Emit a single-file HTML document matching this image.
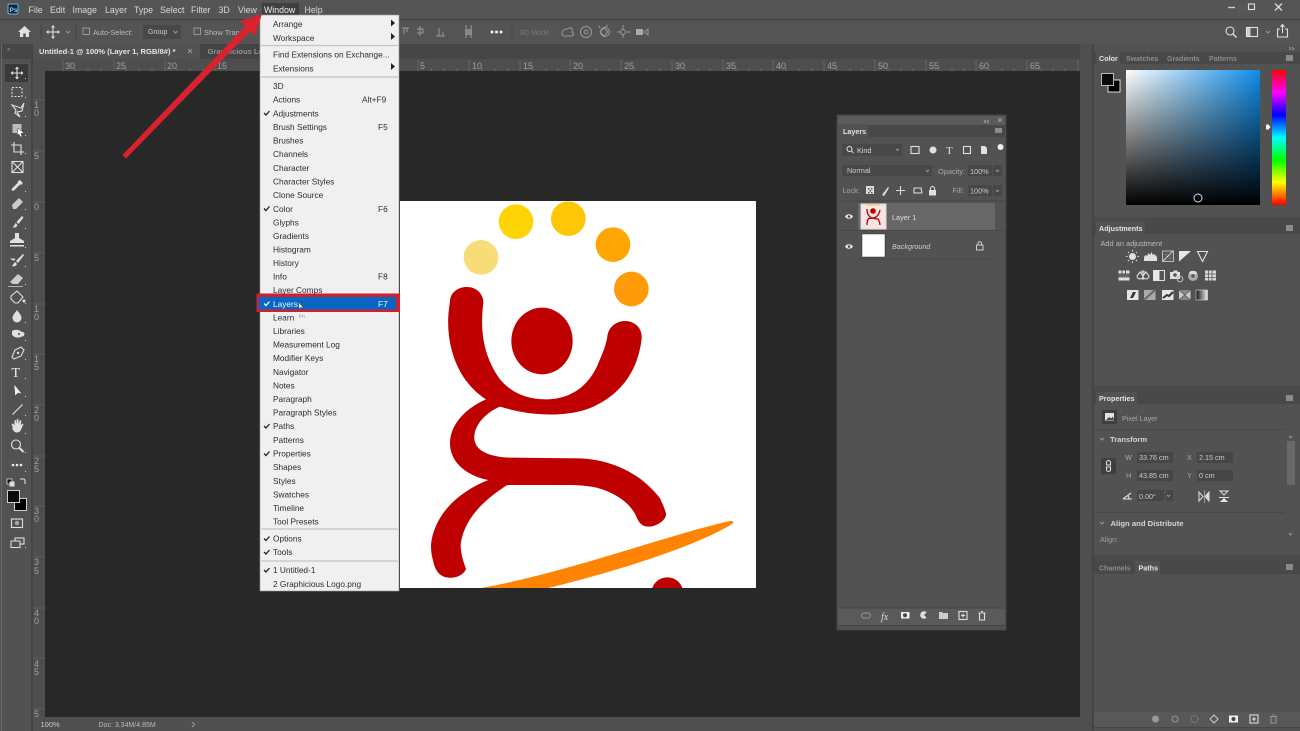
<!DOCTYPE html>
<html><head><meta charset="utf-8"><title>Photoshop</title>
<style>
html,body{margin:0;padding:0;background:#525252;width:1300px;height:731px;overflow:hidden}
svg{display:block;filter:blur(.35px)}
text{font-family:"Liberation Sans",sans-serif;font-size:8.8px;fill:#d8d8d8}
.m text{fill:#2c2c2c;font-size:8.3px}
.t{fill:#e4e4e4;font-weight:bold;font-size:7.2px}
.r text{fill:#a0a0a0;font-size:9px}
.s{fill:#aaa;font-size:7px}
.ic{fill:none;stroke:#e0e0e0;stroke-width:1.1}
.f{fill:#e0e0e0;stroke:none}
.g{fill:none;stroke:#9a9a9a;stroke-width:1}
</style></head><body>
<svg width="1300" height="731" viewBox="0 0 1300 731" xmlns="http://www.w3.org/2000/svg">
<defs>
<linearGradient id="cw" x1="0" x2="1" y1="0" y2="0"><stop offset="0" stop-color="#fff"/><stop offset="1" stop-color="#0f8ce8"/></linearGradient>
<linearGradient id="cb" x1="0" x2="0" y1="0" y2="1"><stop offset="0" stop-color="#000" stop-opacity="0"/><stop offset="1" stop-color="#000"/></linearGradient>
<linearGradient id="hue" x1="0" x2="0" y1="0" y2="1"><stop offset="0" stop-color="#f00"/><stop offset=".167" stop-color="#f0f"/><stop offset=".333" stop-color="#00f"/><stop offset=".5" stop-color="#0ff"/><stop offset=".667" stop-color="#0f0"/><stop offset=".833" stop-color="#ff0"/><stop offset="1" stop-color="#f00"/></linearGradient>
<linearGradient id="gr" x1="0" x2="1" y1="0" y2="0"><stop offset="0" stop-color="#111"/><stop offset="1" stop-color="#eee"/></linearGradient>
<clipPath id="cv"><rect x="400" y="201" width="356" height="387"/></clipPath>
</defs>

<!-- base -->
<rect width="1300" height="731" fill="#525252"/>
<rect x="0" y="0" width="1300" height="19" fill="#555"/>
<rect x="0" y="19" width="1300" height="1" fill="#3f3f3f"/>
<rect x="0" y="20" width="1300" height="24" fill="#545454"/>
<rect x="0" y="44" width="1093" height="15" fill="#464646"/>
<rect x="33" y="44" width="167" height="15" fill="#525252"/>
<rect x="200" y="44" width="60" height="15" fill="#444"/>
<rect x="33" y="59" width="1047" height="12" fill="#4e4e4e"/>
<rect x="33" y="59" width="12" height="658" fill="#4e4e4e"/>
<rect x="45" y="71" width="1035" height="646" fill="#282828"/>
<rect x="33" y="717" width="1047" height="14" fill="#505050"/>
<rect x="1" y="44" width="1" height="687" fill="#6a6a6a"/>
<rect x="3" y="59" width="29" height="672" fill="#525252"/>
<rect x="31" y="44" width="2" height="687" fill="#444"/>
<rect x="1080" y="44" width="13" height="687" fill="#4f4f4f"/>
<rect x="1092" y="44" width="2" height="687" fill="#444"/>
<rect x="5" y="64" width="23" height="18" fill="#3a3a3a"/>

<!-- title/menu bar -->
<rect x="8" y="4" width="10" height="10" rx="1.5" fill="#0c2438" stroke="#6cb6e8" stroke-width="1"/>
<text x="9.5" y="12" style="font-size:6.5px;fill:#8cd0ff;font-weight:bold">Ps</text>
<text x="28.5" y="13">File</text><text x="50" y="13">Edit</text><text x="72.5" y="13">Image</text><text x="105" y="13">Layer</text><text x="134" y="13">Type</text><text x="160" y="13">Select</text><text x="191" y="13">Filter</text><text x="218.5" y="13">3D</text><text x="238" y="13">View</text>
<rect x="262" y="3" width="37" height="14" fill="#3f3f3f"/>
<text x="264" y="13" style="fill:#f0f0f0">Window</text><text x="304.5" y="13">Help</text>
<rect x="1237" y="5" width="13" height="9" fill="#5a5a5a" opacity=".5"/>
<path d="M1228 7.5h7" stroke="#ccc" stroke-width="1.4"/><rect x="1248.5" y="4" width="6" height="5.5" class="ic"/><path d="M1275 3.5l7 7M1282 3.5l-7 7" stroke="#ddd" stroke-width="1.3"/>

<!-- options bar -->
<path class="f" d="M18 32l6.5-6 6.5 6h-2v5h-3.2v-3.5h-2.6V37H20v-5z"/>
<path d="M41 23v18M76 23v18" stroke="#444"/>
<g class="ic"><path d="M53 27v10M48 32h10"/></g><path class="f" d="M53 25l2 2.5h-4zM53 39l2-2.5h-4zM46 32l2.5-2v4zM60 32l-2.5-2v4z"/>
<path class="g" d="M66 31l2 2 2-2"/>
<rect x="83" y="28" width="6.5" height="6.5" class="g" stroke="#888"/>
<text x="93" y="35" style="fill:#bbb;font-size:7.3px">Auto-Select:</text>
<rect x="143" y="25" width="38" height="14" fill="#484848"/>
<text x="148" y="34" style="fill:#ccc;font-size:7px">Group</text><path class="g" d="M173.500 31l2 2 2-2"/>
<rect x="194" y="28" width="6.500" height="6.500" class="g"/>
<text x="204" y="35" style="fill:#bbb;font-size:7.5px">Show Trans</text>
<g class="g" stroke-width="1.2">
<path d="M402 28h7M404 28v6M407 28v4M420 26v10M417 29h6v4h-6M436 36h9M439 28v8M443 32v4M466 25v13M471 25v13"/>
<rect x="465" y="29" width="7" height="6" fill="#888" stroke="none"/>
</g>
<circle cx="492" cy="32" r="1.500" fill="#eee"/><circle cx="496.500" cy="32" r="1.500" fill="#eee"/><circle cx="501" cy="32" r="1.500" fill="#eee"/>
<path d="M512 25v14" stroke="#4a4a4a"/>
<text x="519.500" y="35" style="fill:#787878;font-size:7.4px">3D Mode</text>
<g fill="none" stroke="#999" stroke-width="1">
<path d="M562 33c0-3 3-4 5-4s2-2 4-1c2 1 2 3 1 4 2 1 2 4-1 4h-7c-1 0-2-1-2-3z"/>
<circle cx="586" cy="32" r="5.500"/><circle cx="586" cy="32" r="2"/>
<path d="M600 32l4-4 4 4-4 4zM605 27l3-2M600 28l-1-2"/><circle cx="605" cy="32" r="4.500"/>
<circle cx="623" cy="32" r="2.500"/><path d="M623 25v4M623 35v3M617 32h3M626 32h5"/>
</g>
<rect x="636" y="29" width="7" height="6" fill="#aaa"/><path d="M644 32l4-3v6z" fill="none" stroke="#999"/>
<!-- right options -->
<circle cx="1230" cy="31" r="4" class="ic" stroke-width="1.300"/><path d="M1233 34l3.500 3.500" stroke="#ddd" stroke-width="1.500"/>
<rect x="1246.500" y="27.500" width="11" height="9" class="ic"/><rect x="1247" y="28" width="3.500" height="8" fill="#ccc"/>
<path class="g" d="M1266 31l2 2 2-2"/>
<path class="ic" d="M1280 29h-2.500v8h10v-8H1285M1282.500 33v-8M1280.500 27l2-2.500 2 2.500" stroke-width="1.200"/>

<!-- tabs -->
<text x="39" y="54" class="t" style="font-size:7.6px">Untitled-1 @ 100% (Layer 1, RGB/8#) *</text>
<path d="M188 49l4 4M192 49l-4 4" stroke="#999"/>
<text x="207.500" y="54" style="fill:#929292;font-weight:bold;font-size:7.6px">Graphicious Le</text>
<text x="7" y="51" style="font-size:6px;fill:#999">»</text>

<!-- ruler -->
<g class="r">
<text x="65" y="69">30</text><text x="116" y="69">25</text><text x="167" y="69">20</text><text x="217" y="69">15</text>
<text x="420" y="69">5</text><text x="472" y="69">10</text><text x="523" y="69">15</text><text x="573" y="69">20</text><text x="624" y="69">25</text><text x="675" y="69">30</text><text x="726" y="69">35</text><text x="776" y="69">40</text><text x="827" y="69">45</text><text x="878" y="69">50</text><text x="929" y="69">55</text><text x="979" y="69">60</text><text x="1030" y="69">65</text>
<text x="34" y="108">1</text><text x="34" y="116">0</text><text x="34" y="159">5</text><text x="34" y="210">0</text><text x="34" y="261">5</text>
<text x="34" y="312">1</text><text x="34" y="320">0</text><text x="34" y="362">1</text><text x="34" y="370">5</text>
<text x="34" y="413">2</text><text x="34" y="421">0</text><text x="34" y="464">2</text><text x="34" y="472">5</text>
<text x="34" y="514">3</text><text x="34" y="522">0</text><text x="34" y="565">3</text><text x="34" y="574">5</text>
<text x="34" y="616">4</text><text x="34" y="624">0</text><text x="34" y="667">4</text><text x="34" y="675">5</text><text x="34" y="717">5</text>
</g>
<path d="M63 60v11M114 60v11M165 60v11M215 60v11M418 60v11M469 60v11M520 60v11M570 60v11M621 60v11M672 60v11M723 60v11M773 60v11M824 60v11M875 60v11M926 60v11M976 60v11M1027 60v11M1078 60v11" stroke="#6e6e6e" stroke-width=".8"/>
<path d="M75 68v3M88 68v3M101 68v3M126 68v3M139 68v3M152 68v3M177 68v3M190 68v3M203 68v3M431 68v3M444 68v3M457 68v3M482 68v3M495 68v3M508 68v3M533 68v3M546 68v3M558 68v3M583 68v3M596 68v3M609 68v3M634 68v3M647 68v3M660 68v3M685 68v3M698 68v3M710 68v3M736 68v3M749 68v3M761 68v3M786 68v3M799 68v3M812 68v3M837 68v3M850 68v3M862 68v3M888 68v3M901 68v3M913 68v3M939 68v3M952 68v3M964 68v3M989 68v3M1002 68v3M1014 68v3M1040 68v3M1053 68v3M1065 68v3" stroke="#757575" stroke-width=".7"/>
<path d="M33 100h12M33 151h12M33 202h12M33 253h12M33 304h12M33 354h12M33 405h12M33 456h12M33 506h12M33 557h12M33 608h12M33 658h12M33 709h12" stroke="#666" stroke-width=".8"/>

<!-- toolbar -->
<g>
<path class="ic" d="M17 68v10M12 73h10"/><path class="f" d="M17 66.500l2 2.500h-4zM17 79.500l2-2.500h-4zM10.500 73l2.500-2v4zM23.500 73l-2.500-2v4z"/>
<rect x="12" y="87.500" width="10" height="9" class="ic" stroke-dasharray="2 1.500"/>
<path class="ic" d="M12 105l9 3 3-5-2 8-5 1 3 5-5-4 1-3-4-5z"/>
<rect x="12.500" y="124" width="9" height="9" class="f" opacity=".75"/><path d="M18 128l6 5-3 .5 1 3-2 .5-1-3-2 1.500z" fill="#fff" stroke="#333" stroke-width=".5"/>
<path d="M14 142v10h10M11 145h10v10" class="ic" stroke-width="1.400"/>
<rect x="12" y="161.500" width="11" height="11" class="ic"/><path class="ic" d="M12 161.500l11 11M23 161.500l-11 11"/>
<path class="f" d="M20 180l3 3-2 2-1-.5-5.500 5.500-2 1-1-1 1-2 5.500-5.500-.5-1z"/>
<path class="f" d="M12 205l7-7 4 4-7 7-3 0z" opacity=".85"/>
<path class="f" d="M22 216l1.500 1.500-5 6.500-2-2zM15.500 223l2 2c-.5 2-3 3-5 2.500 1.500-1 2-3 3-4.500z"/>
<path class="f" d="M15 233h4v5l5 3v2H10v-2l5-3zM10 245h14v1.500H10z"/>
<path class="f" d="M23 254l1 1-6 8-2-2zM10 258c2 1 4 0 5 1s-1 2-3 1M15 262l2 2c-1 2-3 3-5 2z"/>
<path class="f" d="M18 274l5 4-5 6h-5l-3-2zM8 286h15v.8H8z" opacity=".85"/>
<path class="ic" d="M11 296l6-5 6 6-5 6h-3l-4-4z" stroke-width="1.300"/><circle cx="24" cy="301" r="1.500" class="f"/>
<path class="f" d="M17 310c2 3 4.500 5 4.500 8a4.500 4.500 0 0 1-9 0c0-3 2.500-5 4.500-8z"/>
<path class="f" d="M12 331c3-2 7-1.500 9 .5l3 1c1 2 0 4-2 4-3 2-9 1-10-2z"/><circle cx="19" cy="334" r="1" fill="#444"/>
<path class="ic" d="M12 357l3-7 6-3 3 3-3 6-7 3z" stroke-width="1.300"/><circle cx="18" cy="353" r="1.200" class="f"/>
<text x="11.500" y="377" style="font-size:14px;font-family:'Liberation Serif',serif;fill:#eee">T</text>
<path d="M14 384l1 12 3-3 4 1z" fill="#eee" stroke="#333" stroke-width=".4"/>
<path d="M12.500 414.500l10-10" stroke="#ddd" stroke-width="1.200"/>
<path class="f" d="M13 428l-1.500-4 1.500-.5 1.500 2v-5l1.500-.5.800 4v-5h1.500l.5 5 1-4 1.500.5-.5 5 1.500-2 1.200.8-2.500 5.500c-1 2-2 2.700-4 2.700-2.500 0-3.500-1.500-5-4.500z"/>
<circle cx="16" cy="444.500" r="4.500" class="ic" stroke-width="1.500"/><path d="M19.500 448l4 4" stroke="#ddd" stroke-width="2"/>
<circle cx="13" cy="465" r="1.300" fill="#eee"/><circle cx="17" cy="465" r="1.300" fill="#eee"/><circle cx="21" cy="465" r="1.300" fill="#eee"/>
<rect x="7" y="479" width="5" height="5" fill="#111" stroke="#ddd" stroke-width=".8"/><rect x="9.500" y="481.500" width="5" height="5" fill="#ddd"/>
<path class="ic" d="M20 479h3.500a1.500 1.500 0 0 1 1.500 1.500V484"/>
<rect x="14.500" y="498.500" width="12" height="12" fill="#000" stroke="#ccc" stroke-width="1"/>
<rect x="7.500" y="490.500" width="12" height="12" fill="#0a0a0a" stroke="#ccc" stroke-width="1"/>
<rect x="11.500" y="519" width="11" height="8.500" class="ic"/><circle cx="17" cy="523" r="2.200" class="f" opacity=".6"/>
<rect x="15" y="538" width="9" height="6" class="ic"/><rect x="11" y="541" width="9" height="6.500" fill="#525252" stroke="#e0e0e0" stroke-width="1"/>
<g fill="#ccc"><rect x="25" y="78" width="1" height="1"/><rect x="25" y="97" width="1" height="1"/><rect x="25" y="116" width="1" height="1"/><rect x="25" y="135" width="1" height="1"/><rect x="25" y="153" width="1" height="1"/><rect x="25" y="191" width="1" height="1"/><rect x="25" y="209" width="1" height="1"/><rect x="25" y="228" width="1" height="1"/><rect x="25" y="247" width="1" height="1"/><rect x="25" y="266" width="1" height="1"/><rect x="25" y="284" width="1" height="1"/><rect x="25" y="303" width="1" height="1"/><rect x="25" y="322" width="1" height="1"/><rect x="25" y="340" width="1" height="1"/><rect x="25" y="359" width="1" height="1"/><rect x="25" y="378" width="1" height="1"/><rect x="25" y="396" width="1" height="1"/><rect x="25" y="415" width="1" height="1"/><rect x="25" y="433" width="1" height="1"/><rect x="25" y="452" width="1" height="1"/><rect x="25" y="471" width="1" height="1"/><rect x="25" y="547" width="1" height="1"/></g>
</g>

<!-- status bar -->
<text x="40.500" y="727" style="font-size:7.500px;fill:#ccc">100%</text>
<text x="98.500" y="727" style="font-size:7px;fill:#bbb">Doc: 3.34M/4.85M</text>
<path d="M192 722l2.500 2.500-2.500 2.500" class="g" stroke="#ccc"/>

<!-- canvas image -->
<rect x="400" y="201" width="356" height="387" fill="#fff"/>
<g clip-path="url(#cv)">
<g transform="translate(400 195) scale(.33333)">
<circle cx="243" cy="187" r="52" fill="#f8dc78"/>
<circle cx="348" cy="80" r="52" fill="#ffd404"/>
<circle cx="505" cy="71" r="52" fill="#fdc706"/>
<circle cx="639" cy="149" r="52" fill="#ffa505"/>
<circle cx="694" cy="282" r="52" fill="#ff9a08"/>
<ellipse cx="426" cy="438" rx="92" ry="100" fill="#bf0000"/>
<path fill="#bf0000" d="M150 320C150 292 175 276 200 276C230 276 251 297 250 325C240 400 248 480 298 550C335 598 390 614 440 613C515 612 570 570 597 500C610 470 618 450 622 425C625 395 650 378 675 378C705 378 727 400 725 430C715 520 670 590 590 630C530 662 420 672 300 635C255 655 222 690 223 730C224 765 265 786 330 788L540 790C650 795 730 845 780 910C790 930 795 945 798 955C800 975 770 995 745 995C725 995 715 982 708 962C690 925 650 895 590 878C550 870 520 870 500 870L322 870C250 915 190 975 182 1050C182 1075 190 1100 198 1122C190 1142 165 1150 145 1148C118 1146 105 1125 100 1100C88 1060 93 1030 105 1000C130 935 190 885 265 855C190 840 150 795 150 745C150 690 195 640 258 613C190 570 150 490 145 400C143 365 147 340 150 320Z"/>
<path fill="#ff8404" d="M228 1182C500 1135 800 1020 990 978C996 977 1001 979 1000 984C900 1050 650 1130 420 1185Z"/>
<circle cx="802" cy="1195" r="48" fill="#bf0000"/>
</g>
</g>

<!-- layers panel -->
<rect x="837" y="115" width="169" height="515" fill="#525252" stroke="#454545"/>
<rect x="838" y="116" width="167" height="9" fill="#5a5a5a"/>
<rect x="838" y="125" width="167" height="12" fill="#484848"/>
<rect x="838" y="124" width="30" height="13" fill="#525252"/>
<text x="843" y="134" class="t">Layers</text>
<path d="M986 120l-2 1.500 2 1.500M989 120l-2 1.500 2 1.500M998 118l4 4M1002 118l-4 4" stroke="#aaa" stroke-width=".8" fill="none"/>
<rect x="995" y="128" width="7" height="5" fill="#8b8b8b"/>
<rect x="842" y="144" width="60" height="12" fill="#484848"/>
<circle cx="849.500" cy="149" r="2.500" class="ic"/><path d="M851.500 151l2 2" stroke="#ddd"/>
<text x="857" y="153" style="font-size:7.2px;fill:#ddd">Kind</text><path class="g" d="M896 149l1.500 1.500 1.500-1.500"/>
<rect x="911" y="146.500" width="8" height="7" class="ic"/>
<circle cx="933" cy="150" r="3.500" class="f"/><text x="946" y="154" style="font-family:'Liberation Serif',serif;font-size:11px;fill:#ddd">T</text>
<rect x="963.500" y="146.500" width="7" height="7" class="ic"/><path class="f" d="M981 146h4l2 2v6h-6z"/><circle cx="1000.500" cy="147" r="3" fill="#eee"/>
<rect x="842" y="165" width="90" height="11" fill="#484848"/>
<text x="847" y="173" style="font-size:7.3px;fill:#ccc">Normal</text><path class="g" d="M926 170l1.500 1.500 1.500-1.500"/>
<text x="938" y="174" style="font-size:7.4px;fill:#a8a8a8">Opacity:</text>
<rect x="968" y="165" width="24" height="11" fill="#474747"/><text x="970" y="174" style="font-size:7.3px;fill:#ccc">100%</text>
<rect x="993" y="165" width="9" height="11" fill="#474747"/><path class="g" d="M996 170l1.500 1.500 1.500-1.500"/>
<text x="842.500" y="193" style="font-size:7.2px;fill:#a8a8a8">Lock:</text>
<rect x="866" y="186" width="8" height="8" fill="#ddd"/><path d="M868 188h1.500v1.500H868zM871 188h1.500v1.500H871zM869.500 190h1.500v1.500h-1.500zM868 192h1.500v1.500H868zM871 192h1.500v1.500H871z" fill="#555"/>
<path d="M882 195l6-8 1 1-5 8z" class="f"/>
<path class="ic" d="M900.500 186v9M896 190.500h9"/><path class="ic" d="M914 188h7l1 5M914 188v5h8"/>
<rect x="929" y="190" width="7" height="5.500" class="f"/><path class="ic" d="M930.500 190v-1.500a2 2 0 0 1 4 0V190"/>
<text x="952.500" y="193" style="font-size:7.3px;fill:#a8a8a8">Fill:</text>
<rect x="968" y="185" width="24" height="11" fill="#474747"/><text x="970" y="193.500" style="font-size:7.3px;fill:#ccc">100%</text>
<rect x="993" y="185" width="9" height="11" fill="#474747"/><path class="g" d="M996 190l1.500 1.500 1.500-1.500"/>
<path d="M838 201h167" stroke="#464646"/>
<rect x="858" y="203" width="137" height="27" fill="#676767"/>
<rect x="861" y="204" width="25" height="25" fill="#f8e4e4" stroke="#ddd"/>
<circle cx="873" cy="211" r="2.800" fill="#b80000"/><path d="M867 209c0 7 4 9 6 9s6-2 7-8M868 219c3-2 7 0 10 0 1 2 2 3 2 6M869 218c-2 2-2 5-2 7" fill="none" stroke="#b80000" stroke-width="1.300"/>
<path d="M866 205h14" stroke="#f3c94c"/>
<text x="892" y="220" style="font-size:7.3px;fill:#ddd">Layer 1</text>
<path d="M838 230.500h167M858 259h137" stroke="#484848"/>
<rect x="862" y="234" width="23" height="23" fill="#fff" stroke="#333" stroke-width=".5"/>
<text x="892" y="249" style="font-size:7.2px;fill:#ccc;font-style:italic">Background</text>
<rect x="976.500" y="245" width="6.500" height="5" fill="none" stroke="#ccc"/><path d="M978 245v-2a1.800 1.800 0 0 1 3.500 0v2" fill="none" stroke="#ccc"/>
<g><path d="M845 216.500c2-3 6-3 8 0-2 3-6 3-8 0zM845 246.500c2-3 6-3 8 0-2 3-6 3-8 0z" fill="#eee"/><circle cx="849" cy="216.500" r="1.300" fill="#444"/><circle cx="849" cy="246.500" r="1.300" fill="#444"/></g>
<rect x="838" y="608" width="167" height="17" fill="#5a5a5a"/>
<path d="M838 608h167M838 625.500h167" stroke="#464646"/>
<rect x="861.500" y="613" width="9" height="5" rx="2.500" fill="none" stroke="#999"/>
<text x="881" y="620" style="font-size:10px;font-style:italic;fill:#ddd;font-family:'Liberation Serif',serif">fx</text>
<rect x="901" y="612" width="8.500" height="6.500" fill="#eee"/><circle cx="905" cy="615.300" r="2" fill="#444"/>
<circle cx="924" cy="615" r="3.800" class="f"/><path d="M924 615l3-3a4 4 0 0 1 0 6z" fill="#555"/>
<path class="f" d="M939 612h3l1 1h5v6h-9z" opacity=".85"/>
<rect x="959" y="611.500" width="8" height="8" class="ic"/><path class="ic" d="M963 613.500v4M961 615.500h4"/>
<path class="ic" d="M978.500 613h7M979.500 613v7h5v-7M981 611.500h2"/>

<!-- right: Color panel -->
<rect x="1094" y="52" width="206" height="12" fill="#484848"/>
<rect x="1096" y="52" width="24" height="12" fill="#525252"/>
<text x="1099" y="61" class="t">Color</text>
<text x="1126" y="61" class="s" style="font-weight:bold;fill:#8c8c8c">Swatches</text><text x="1167" y="61" class="s" style="font-weight:bold;fill:#8c8c8c">Gradients</text><text x="1209" y="61" class="s" style="font-weight:bold;fill:#8c8c8c">Patterns</text>
<rect x="1286" y="55" width="7" height="6" fill="#8a8a8a"/>
<path d="M1289 47l2 1.500-2 1.500M1292 47l2 1.500-2 1.500" stroke="#999" fill="none" stroke-width=".8"/>
<rect x="1108" y="80" width="12" height="12" fill="#000" stroke="#ddd"/>
<rect x="1101.500" y="73.500" width="12" height="12" fill="#0a0a0a" stroke="#bbb"/>
<rect x="1126" y="70" width="134" height="135" fill="url(#cw)"/><rect x="1126" y="70" width="134" height="135" fill="url(#cb)"/>
<circle cx="1198" cy="198" r="4" fill="none" stroke="#ddd"/>
<rect x="1272" y="70" width="14" height="135" fill="url(#hue)"/>
<path d="M1266 124.500h2.500l2 2.500-2 2.500h-2.500z" fill="#f2f2f2"/>
<rect x="1094" y="217" width="206" height="5" fill="#4a4a4a"/>

<!-- Adjustments -->
<rect x="1094" y="222" width="206" height="12" fill="#484848"/>
<rect x="1096" y="222" width="49" height="12" fill="#525252"/>
<text x="1099" y="231" class="t">Adjustments</text>
<rect x="1286" y="225" width="7" height="6" fill="#8a8a8a"/>
<text x="1100.500" y="246" style="font-size:7.4px;fill:#bbb">Add an adjustment</text>
<circle cx="1132.500" cy="256.500" r="3.500" class="f"/><path class="ic" d="M1132.500 250v1.500M1132.500 261.500v1.500M1126 256.500h1.500M1137.500 256.500h1.500M1128 252l1 1M1136 260l1 1M1137 252l-1 1M1129 260l-1 1"/>
<path class="f" d="M1144 261v-4l1.500-2 1.500 1 1.500-3 1.500 2 1.500-3 1.500 3 1.500-1 1.500 2 1 1v4z"/>
<rect x="1162.500" y="251" width="11" height="10.500" fill="none" stroke="#bbb"/><path d="M1163 261l10-10" stroke="#ddd"/><path d="M1166 251v10M1170 251v10M1163 254.500h10M1163 258h10" stroke="#888" stroke-width=".6"/>
<rect x="1179" y="251" width="12" height="10.500" fill="#e8e8e8"/><path d="M1179 261.500l12-10.500v10.500z" fill="#555"/>
<path class="ic" d="M1197.500 251.500h10l-5 10z"/>
<rect x="1118.500" y="270.500" width="11" height="10" fill="#e0e0e0"/><path d="M1118.500 274h11M1122 270.500v3.500M1125.500 270.500v3.500" stroke="#555"/><rect x="1118.500" y="274.500" width="11" height="3" fill="#666"/>
<path class="ic" d="M1137 276l3-4 3 4M1143 276l3-4 3 4M1140 272h6M1143 270v10M1137 276a3 3 0 0 0 6 0M1143 276a3 3 0 0 0 6 0" stroke-width=".8"/>
<rect x="1153.500" y="270.500" width="11" height="10" fill="#555" stroke="#e0e0e0"/><rect x="1153.500" y="270.500" width="6" height="10" fill="#e8e8e8"/>
<path class="f" d="M1170 272h3l1-1.500h3l1 1.500h2v7h-10z"/><circle cx="1175" cy="275" r="1.800" fill="#555"/><circle cx="1180" cy="279" r="2.800" fill="none" stroke="#bbb"/>
<circle cx="1193" cy="276" r="5" fill="#aaa"/><path d="M1193 271a3 3 0 0 1 4 3h-8a3 3 0 0 1 4-3z" fill="#ddd"/><circle cx="1193" cy="276" r="1.700" fill="#555"/>
<rect x="1205" y="270.500" width="11" height="10" fill="#d8d8d8"/><path d="M1208.500 270.500v10M1212 270.500v10M1205 274h11M1205 277.500h11" stroke="#555" stroke-width=".8"/>
<rect x="1127" y="290" width="11.500" height="10" fill="#e4e4e4"/><path d="M1130 298l3-6h3l-3 6z" fill="#333"/>
<rect x="1144" y="290" width="11.500" height="10" fill="#aaa"/><path d="M1144 300l11-10" stroke="#666" stroke-width="2"/>
<rect x="1162" y="290" width="11.500" height="10" fill="#e4e4e4"/><path d="M1163 298l4-3 2 1 4-4" stroke="#333" stroke-width="2" fill="none"/>
<rect x="1179" y="290" width="11.500" height="10" fill="#ccc"/><path d="M1179 290l5.700 5 5.800-5M1179 300l5.700-5 5.800 5" stroke="#666" fill="#888"/>
<rect x="1196" y="290" width="11.500" height="10" fill="url(#gr)" stroke="#ddd" stroke-width=".6"/>
<rect x="1094" y="386" width="206" height="6" fill="#4a4a4a"/>

<!-- Properties -->
<rect x="1094" y="392" width="206" height="12" fill="#484848"/>
<rect x="1096" y="392" width="41" height="12" fill="#525252"/>
<text x="1099" y="401" class="t">Properties</text>
<rect x="1286" y="395" width="7" height="6" fill="#8a8a8a"/>
<rect x="1102" y="410" width="15" height="14" fill="#3f3f3f"/><rect x="1105" y="413" width="9" height="7.500" fill="#e4e4e4"/><path d="M1106 420l3-3 2 1.500 2-2 1 3.500z" fill="#444"/>
<text x="1122" y="421" style="font-size:7.2px;fill:#a8a8a8">Pixel Layer</text>
<path d="M1094 429.500h190" stroke="#484848"/>
<path d="M1100 438l2 2 2-2" class="g" stroke="#bbb"/>
<text x="1110" y="442" class="t" style="fill:#d4d4d4;font-size:7.6px">Transform</text>
<rect x="1101" y="458" width="15" height="16" fill="#3f3f3f"/><path class="ic" d="M1106.500 462.500a2 2 0 0 1 4 0v2.500h-4zM1106.500 467h4v2.500a2 2 0 0 1-4 0z" stroke-width=".9"/>
<text x="1125" y="460" style="font-size:7.2px;fill:#aaa">W</text>
<rect x="1137" y="452" width="36" height="11" fill="#464646"/><text x="1139" y="460" style="font-size:7.2px;fill:#ccc">33.76 cm</text>
<text x="1126" y="478" style="font-size:7.2px;fill:#aaa">H</text>
<rect x="1137" y="470" width="36" height="11" fill="#464646"/><text x="1139" y="478" style="font-size:7.2px;fill:#ccc">43.85 cm</text>
<text x="1187" y="460" style="font-size:7.2px;fill:#aaa">X</text>
<rect x="1197" y="452" width="36" height="11" fill="#464646"/><text x="1199" y="460" style="font-size:7.2px;fill:#ccc">2.15 cm</text>
<text x="1187" y="478" style="font-size:7.2px;fill:#aaa">Y</text>
<rect x="1197" y="470" width="36" height="11" fill="#464646"/><text x="1199" y="478" style="font-size:7.2px;fill:#ccc">0 cm</text>
<path class="ic" d="M1123 499l8-6M1123 499h9M1128 495.500l1.500 3.500" stroke-width=".9"/>
<rect x="1137" y="490" width="36" height="11" fill="#464646"/><text x="1139" y="499" style="font-size:7.2px;fill:#ccc">0.00°</text>
<path d="M1165 490v11" stroke="#5c5c5c"/><path class="g" d="M1167 495l1.500 1.500 1.500-1.500"/>
<path d="M1199 492v9l4-4.500zM1209 492v9l-4-4.500z" fill="none" stroke="#ddd"/><path d="M1209 492v9l-3-4.500z" fill="#ddd"/><path d="M1204.500 490v13" stroke="#ccc" stroke-width=".6"/>
<path d="M1220 491h8l-4 4z" fill="none" stroke="#ddd"/><path d="M1219 497.500h10" stroke="#ddd"/><path d="M1220 502h8l-4-4z" fill="#e8e8e8"/>
<path d="M1094 512.500h190" stroke="#484848"/>
<path d="M1100 522l2 2 2-2" class="g" stroke="#bbb"/>
<text x="1110.500" y="526" class="t" style="fill:#d4d4d4;font-size:7.700px">Align and Distribute</text>
<text x="1100" y="542" style="font-size:7.2px;fill:#a0a0a0">Align:</text>
<path d="M1289 438l1.500-2 1.500 2M1289 533l1.500 2 1.500-2" class="g" stroke="#999"/>
<rect x="1287" y="441" width="8" height="44" fill="#696969"/>
<rect x="1094" y="555" width="206" height="6" fill="#4a4a4a"/>

<!-- Channels/Paths -->
<rect x="1094" y="561" width="206" height="13" fill="#484848"/>
<rect x="1135" y="561" width="25" height="13" fill="#525252"/>
<text x="1099" y="570.500" class="s" style="font-weight:bold;fill:#8c8c8c">Channels</text>
<text x="1138.500" y="570.500" class="t">Paths</text>
<rect x="1286" y="564" width="7" height="6" fill="#8a8a8a"/>
<rect x="1094" y="712" width="206" height="15" fill="#585858"/>
<circle cx="1155.500" cy="719" r="3.500" fill="#999"/>
<circle cx="1175" cy="719" r="3" fill="none" stroke="#999"/>
<circle cx="1194.500" cy="719" r="3.500" fill="none" stroke="#888" stroke-dasharray="1.500 1"/>
<path d="M1214 715l4 4-4 4-4-4z" fill="none" stroke="#ccc"/>
<rect x="1229" y="715.500" width="9" height="7" fill="#eee"/><circle cx="1233.500" cy="719" r="2" fill="#444"/>
<rect x="1250" y="715" width="8" height="8" class="ic"/><path class="ic" d="M1254 717v4M1252 719h4"/>
<path class="g" d="M1270 716.500h7M1271 716.500v6.500h5v-6.500M1272.500 715h2"/>
<path d="M1094 727.500h206" stroke="#464646"/>

<!-- Window menu -->
<rect x="260" y="15" width="139" height="576" fill="#f0f0f0" stroke="#9a9a9a" stroke-width=".6"/>
<path d="M261 45.500h137M261 77h137M261 529h137M261 561h137" stroke="#c4c4c4" stroke-width="1.200"/>
<rect x="256.500" y="293.500" width="143.500" height="18.500" fill="#cf1f30"/>
<rect x="258.500" y="297" width="137.500" height="12.500" fill="#0766c4"/>
<g class="m">
<text x="273" y="27">Arrange</text><text x="273" y="41">Workspace</text><text x="273" y="57.500">Find Extensions on Exchange...</text><text x="273" y="71.500">Extensions</text>
<text x="273" y="89">3D</text><text x="273" y="102.500">Actions</text><text x="273" y="116.500">Adjustments</text><text x="273" y="130">Brush Settings</text><text x="273" y="143.500">Brushes</text><text x="273" y="157">Channels</text><text x="273" y="171">Character</text><text x="273" y="184.500">Character Styles</text><text x="273" y="198">Clone Source</text><text x="273" y="212">Color</text><text x="273" y="225.500">Glyphs</text><text x="273" y="239">Gradients</text><text x="273" y="252.500">Histogram</text><text x="273" y="266">History</text><text x="273" y="279.500">Info</text><text x="273" y="293">Layer Comps</text>
<text x="273" y="307" style="fill:#f4f4f4">Layers</text>
<text x="273" y="320.500">Learn</text><text x="273" y="334">Libraries</text><text x="273" y="347.500">Measurement Log</text><text x="273" y="361">Modifier Keys</text><text x="273" y="375">Navigator</text><text x="273" y="388.500">Notes</text><text x="273" y="402">Paragraph</text><text x="273" y="415.500">Paragraph Styles</text><text x="273" y="429">Paths</text><text x="273" y="443">Patterns</text><text x="273" y="456.500">Properties</text><text x="273" y="470">Shapes</text><text x="273" y="484">Styles</text><text x="273" y="497.500">Swatches</text><text x="273" y="511">Timeline</text><text x="273" y="524.500">Tool Presets</text>
<text x="273" y="541.500">Options</text><text x="273" y="555">Tools</text><text x="273" y="573">1 Untitled-1</text><text x="273" y="587">2 Graphicious Logo.png</text>
<text x="362" y="102.500">Alt+F9</text><text x="378" y="130">F5</text><text x="378" y="212">F6</text><text x="378" y="279.500">F8</text><text x="378" y="307" style="fill:#f4f4f4">F7</text>
</g>
<path d="M391 19.500l4 3.500-4 3.500zM391 33l4 3.500-4 3.500zM391 63l4 3.500-4 3.500z" fill="#222"/>
<g fill="none" stroke="#222" stroke-width="1.300">
<path d="M264 113l2 2 3.500-4M264 208.500l2 2 3.500-4M264 426l2 2 3.500-4M264 453.500l2 2 3.500-4M264 538.500l2 2 3.500-4M264 552l2 2 3.500-4M264 570l2 2 3.500-4"/>
<path d="M264 303.500l2 2 3.500-4" stroke="#f4f4f4"/>
</g>
<path d="M298.500 302l.5 7 1.500-1.500 3 .5z" fill="#eee" stroke="#333" stroke-width=".4"/>
<text x="299" y="318" style="font-size:5px;fill:#999">Fn</text>

<!-- red arrow -->
<path d="M122.500 155L126 158.500 250.500 31 245.500 26Z" fill="#d8232f"/>
<path d="M262 14L240 21 255 35.500Z" fill="#d8232f"/>
</svg>
</body></html>
